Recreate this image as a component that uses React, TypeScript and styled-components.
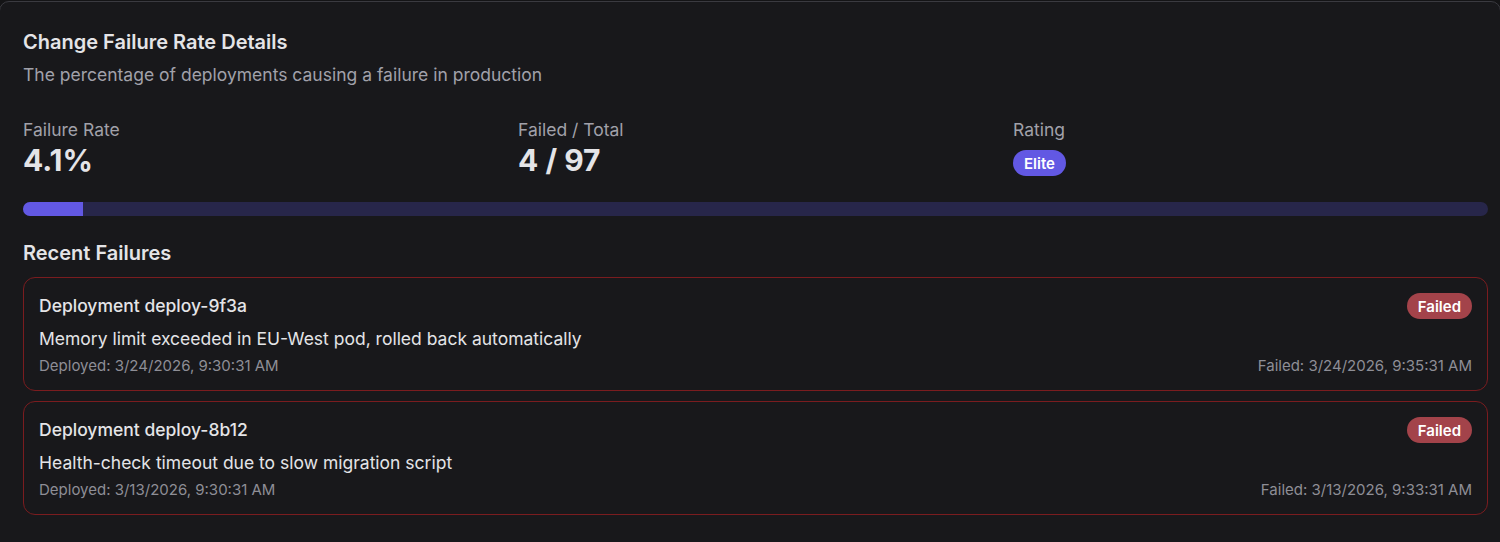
import React from "react";
import styled, { createGlobalStyle } from "styled-components";

const Global = createGlobalStyle`
  html, body { margin: 0; padding: 0; background: #141416; }
  body { font-family: Inter, "Noto Sans", sans-serif; -webkit-font-smoothing: antialiased; }
  * { box-sizing: border-box; }
`;

const Card = styled.section`
  margin-top: 1px;
  margin-left: -1px;
  width: 1502px;
  min-height: 560px;
  background: #18181b;
  border: 1px solid #3a3a40;
  border-radius: 10px;
  padding: 26px 12px 24px 23px;
  color: #e4e4e7;
`;

const Title = styled.h2`
  margin: 0;
  font-size: 20px;
  line-height: 28px;
  font-weight: 600;
  color: #e4e4e7;
`;

const Subtitle = styled.p`
  margin: 7px 0 0;
  font-size: 17.5px;
  line-height: 24px;
  color: #a1a1aa;
`;

const Stats = styled.div`
  display: grid;
  grid-template-columns: repeat(3, 1fr);
  gap: 20px;
  margin-top: 31px;
`;

const Stat = styled.div`
  display: flex;
  flex-direction: column;
  align-items: flex-start;
`;

const Label = styled.span`
  font-size: 17.5px;
  line-height: 24px;
  color: #a1a1aa;
`;

const Value = styled.span`
  font-size: 30px;
  line-height: 36px;
  font-weight: 700;
  color: #e4e4e7;
`;

const Pill = styled.span<{ $tone: "elite" | "failed" }>`
  display: inline-flex;
  align-items: center;
  height: 26px;
  padding: 0 11px;
  border-radius: 999px;
  font-size: 15px;
  font-weight: 600;
  color: #ffffff;
  background: ${(p) => (p.$tone === "elite" ? "#6258e3" : "#a3434a")};
`;

const RatingPill = styled(Pill)`
  margin-top: 8px;
`;

const Track = styled.div`
  margin-top: 24px;
  height: 14px;
  border-radius: 999px;
  background: #27264a;
  overflow: hidden;
`;

const Fill = styled.div`
  height: 100%;
  background: #6258e3;
`;

const SectionTitle = styled.h3`
  margin: 23px 0 0;
  font-size: 20px;
  line-height: 28px;
  font-weight: 600;
  color: #e4e4e7;
`;

const List = styled.div`
  display: flex;
  flex-direction: column;
  gap: 10px;
  margin-top: 10px;
`;

const Failure = styled.article`
  border: 1px solid #7a1c1f;
  border-radius: 12px;
  padding: 15px 15px 14px;
  display: flex;
  flex-direction: column;
`;

const Row = styled.div`
  display: flex;
  justify-content: space-between;
  align-items: center;
`;

const Name = styled.span`
  font-size: 17.5px;
  line-height: 26px;
  font-weight: 500;
  color: #e4e4e7;
`;

const Desc = styled.p`
  margin: 8px 0 0;
  font-size: 17.5px;
  line-height: 24px;
  color: #e4e4e7;
`;

const Meta = styled(Row)`
  margin-top: 5px;
  font-size: 15px;
  line-height: 20px;
  color: #8e8e96;
`;

const failures = [
  {
    id: "deploy-9f3a",
    desc: "Memory limit exceeded in EU-West pod, rolled back automatically",
    deployed: "3/24/2026, 9:30:31 AM",
    failed: "3/24/2026, 9:35:31 AM",
  },
  {
    id: "deploy-8b12",
    desc: "Health-check timeout due to slow migration script",
    deployed: "3/13/2026, 9:30:31 AM",
    failed: "3/13/2026, 9:33:31 AM",
  },
];

export default function App() {
  const rate = 4.1;
  return (
    <>
      <Global />
      <Card>
        <Title>Change Failure Rate Details</Title>
        <Subtitle>The percentage of deployments causing a failure in production</Subtitle>
        <Stats>
          <Stat>
            <Label>Failure Rate</Label>
            <Value>4.1%</Value>
          </Stat>
          <Stat>
            <Label>Failed / Total</Label>
            <Value>4 / 97</Value>
          </Stat>
          <Stat>
            <Label>Rating</Label>
            <RatingPill $tone="elite">Elite</RatingPill>
          </Stat>
        </Stats>
        <Track>
          <Fill style={{ width: `${rate}%` }} />
        </Track>
        <SectionTitle>Recent Failures</SectionTitle>
        <List>
          {failures.map((f) => (
            <Failure key={f.id}>
              <Row>
                <Name>Deployment {f.id}</Name>
                <Pill $tone="failed">Failed</Pill>
              </Row>
              <Desc>{f.desc}</Desc>
              <Meta>
                <span>Deployed: {f.deployed}</span>
                <span>Failed: {f.failed}</span>
              </Meta>
            </Failure>
          ))}
        </List>
      </Card>
    </>
  );
}
